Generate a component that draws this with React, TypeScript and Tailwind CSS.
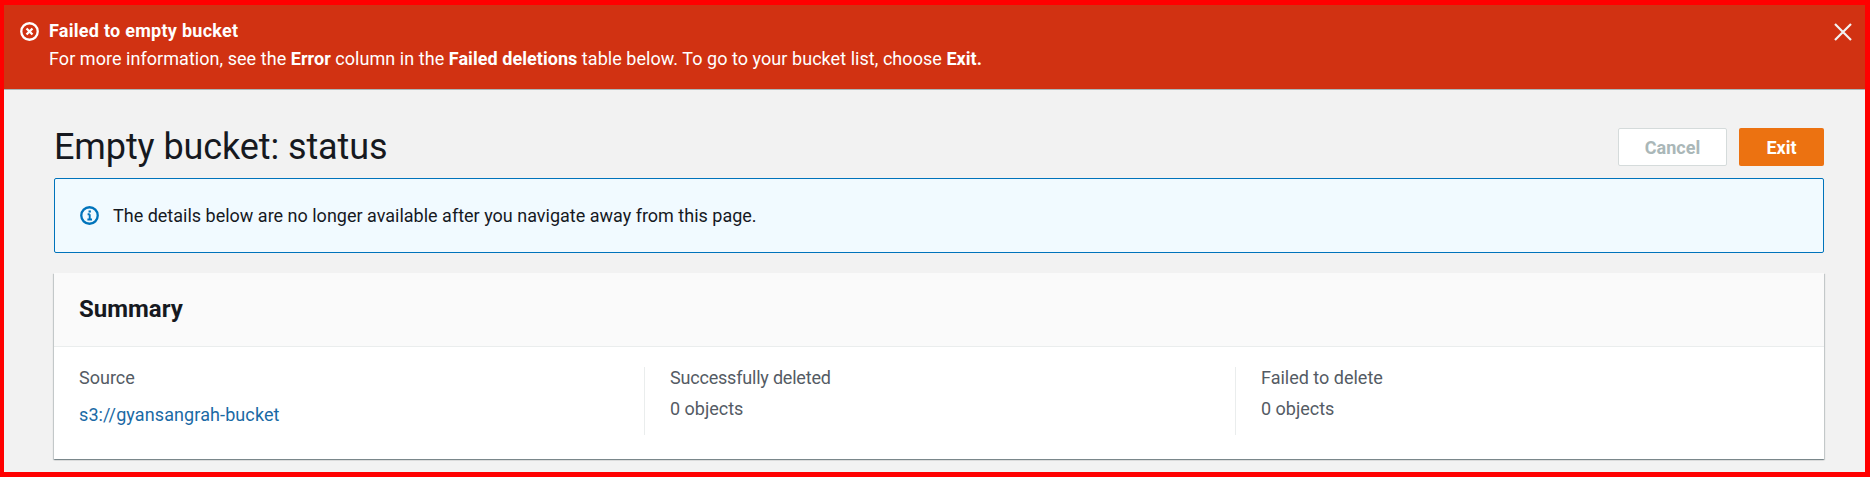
import React from "react";

const ErrorIcon = () => (
  <svg viewBox="0 0 18 18" className="h-[19px] w-[19px] shrink-0" fill="none" stroke="#ffffff">
    <circle cx="9" cy="9" r="7.8" strokeWidth="2.2" />
    <path d="M6.2 6.2l5.6 5.6M11.8 6.2l-5.6 5.6" strokeWidth="2.2" />
  </svg>
);

const InfoIcon = () => (
  <svg viewBox="0 0 18 18" className="h-[19px] w-[19px] shrink-0" fill="none" stroke="#0073bb">
    <circle cx="9" cy="9" r="7.8" strokeWidth="2.2" />
    <path d="M9.2 7.8v5M7 12.8h4.4M7.2 7.8h2" strokeWidth="1.8" />
    <path d="M9.2 4.2v2" strokeWidth="2.2" />
  </svg>
);

const CloseIcon = () => (
  <svg viewBox="0 0 18 18" className="h-[18px] w-[18px]" fill="none" stroke="#f2f3f3" strokeWidth="2.2">
    <path d="M1 1l16 16M17 1L1 17" />
  </svg>
);

function Column({ label, value, link, divider, tight }: { label: string; value: string; link?: boolean; divider?: boolean; tight?: boolean }) {
  return (
    <div className={divider ? "w-[591px] shrink-0 pr-5 pl-[25px] border-r border-[#eaeded] h-[68px]" : "flex-1 pl-[25px] pr-5 h-[68px]"}>
      <div className={tight ? "text-[18px] leading-[22px] text-[#545b64] tracking-[-0.2px]" : "text-[18px] leading-[22px] text-[#545b64]"}>{label}</div>
      <div className={link ? "mt-[15px] text-[18px] leading-[22px] text-[#1a6aa5] tracking-[0.1px]" : "mt-[9px] text-[18px] leading-[22px] text-[#545b64]"}>
        {value}
      </div>
    </div>
  );
}

export default function App() {
  return (
    <div
      className="h-[477px] w-[1870px] border-t-[5px] border-l-[4px] border-r-[5px] border-b-[5px] border-[#ff0000] bg-[#f2f2f2] overflow-hidden"
      style={{ fontFamily: "Roboto, 'Noto Sans', sans-serif" }}
    >
      <div className="flex h-[85px] items-start border-b border-[#aab7b8] bg-[#d13212] pl-[16px] pr-[15px] pt-[15px] text-white">
        <div className="mt-[2px] mr-[10px]">
          <ErrorIcon />
        </div>
        <div className="flex-1">
          <div className="text-[18px] leading-[22px] font-bold tracking-[0.27px]">Failed to empty bucket</div>
          <div className="mt-[6px] text-[18px] leading-[22px] tracking-[0.05px]">
            For more information, see the <b>Error</b> column in the <b>Failed deletions</b> table below. To go to your bucket list, choose <b>Exit.</b>
          </div>
        </div>
        <div className="mt-[3px] mr-[-2px]">
          <CloseIcon />
        </div>
      </div>

      <div className="pl-[50px] pr-[41px]">
        <div className="flex h-[88px] items-start justify-between">
          <h1 className="mt-[33px] text-[36px] leading-[48px] text-[#16191f] tracking-[-0.1px]">Empty bucket: status</h1>
          <div className="mt-[38px] flex gap-[12px]">
            <button className="h-[38px] w-[109px] rounded-[2px] border border-[#d5dbdb] bg-white text-[18px] font-bold text-[#aab7b8]">
              Cancel
            </button>
            <button className="h-[38px] w-[85px] rounded-[2px] bg-[#ec7211] text-[18px] font-bold text-white">
              Exit
            </button>
          </div>
        </div>

        <div className="flex h-[75px] items-center rounded-[2px] border border-[#0073bb] bg-[#f1faff] pl-[25px]">
          <InfoIcon />
          <span className="ml-[14px] text-[18px] leading-[22px] text-[#16191f]">
            The details below are no longer available after you navigate away from this page.
          </span>
        </div>

        <div className="mt-[20px] h-[186px] bg-white shadow-[0_1px_1px_0_rgba(0,28,36,0.3),1px_1px_1px_0_rgba(0,28,36,0.15),-1px_1px_1px_0_rgba(0,28,36,0.15)]">
          <div className="flex h-[74px] items-center border-b border-[#eaeded] bg-[#fafafa] pl-[25px]">
            <h2 className="mt-[-2px] text-[24px] leading-[28px] font-bold text-[#16191f]">Summary</h2>
          </div>
          <div className="flex pt-[20px]">
            <Column divider label="Source" value="s3://gyansangrah-bucket" link />
            <Column divider tight label="Successfully deleted" value="0 objects" />
            <Column label="Failed to delete" value="0 objects" />
          </div>
        </div>
      </div>
    </div>
  );
}
